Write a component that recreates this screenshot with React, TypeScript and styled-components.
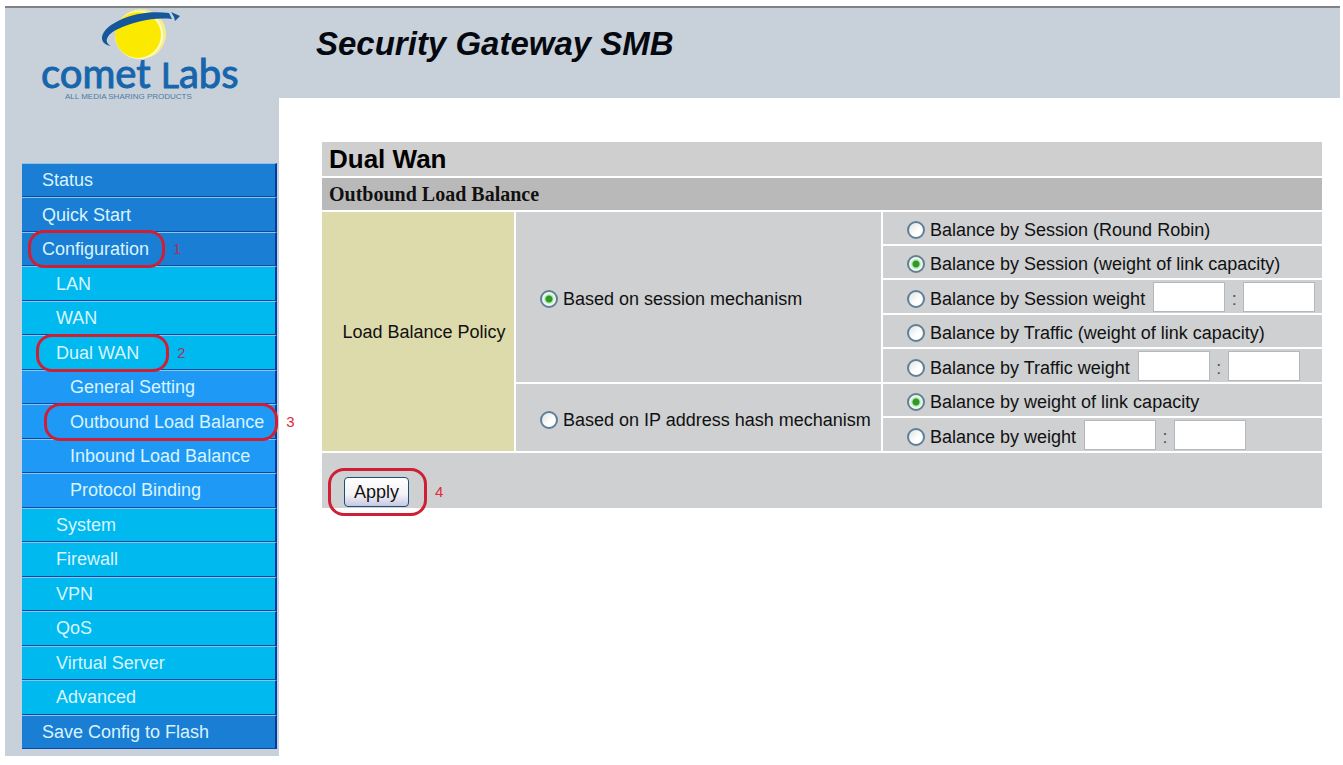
import React, { Fragment } from 'react';
import styled, { createGlobalStyle, css } from 'styled-components';

const Global = createGlobalStyle`
  * { box-sizing: border-box; }
  body {
    margin: 0;
    background: #fff;
    color: #111;
    font: 18px/20px "Liberation Sans", Arial, sans-serif;
  }
`;

const Page = styled.div`
  display: flex;
  align-items: flex-start;
  padding: 6px 3px 8px 5px;
`;

const Sidebar = styled.aside`
  flex: 0 0 274px;
  padding-bottom: 7px;
  border-top: 2px solid #7e8386;
  background: #c8d1d9;
`;

const LogoLink = styled.a`
  display: block;
  height: 155px;
  padding-left: 31px;
`;

const Nav = styled.nav`
  margin: 0 2px 0 17px;
`;

const NavList = styled.ul`
  display: grid;
  grid-auto-rows: 1fr;
  min-height: 586px;
  margin: 0;
  padding: 0;
  list-style: none;
`;

const levels = [
  { background: '#1a7ed4', indent: 20 },
  { background: '#00b9ee', indent: 34 },
  { background: '#1e9af6', indent: 48 },
];

const NavItem = styled.li<{ $level: number }>`
  display: flex;
  align-items: center;
  padding-left: ${(p) => levels[p.$level].indent}px;
  background: ${(p) => levels[p.$level].background};
  border-top: 1px solid #8cc4f0;
  border-right: 2px solid #063a9c;
  border-bottom: 1px solid #0a4ba8;
`;

const NavLink = styled.a`
  color: #d9f4ff;
  text-decoration: none;
  white-space: nowrap;
`;

const Marked = styled.span`
  position: relative;
  display: inline-flex;
  vertical-align: top;
`;

const Ring = styled.span<{ $left: number; $right: number }>`
  position: absolute;
  top: -9px;
  bottom: -9px;
  left: -${(p) => p.$left}px;
  right: -${(p) => p.$right}px;
  border: 3px solid #cf1f35;
  border-radius: 16px;
  pointer-events: none;
`;

const Step = styled.span<{ $muted?: boolean }>`
  position: absolute;
  left: 100%;
  top: 50%;
  margin: -10px 0 0 11px;
  color: ${(p) => (p.$muted ? '#a8305f' : '#e02a38')};
  font-size: 15px;
`;

const Main = styled.main`
  flex: 1;
  min-width: 0;
`;

const Header = styled.header`
  height: 92px;
  padding: 18px 37px;
  border-top: 2px solid #7e8386;
  background: #c8d1d9;
`;

const ProductName = styled.h1`
  margin: 0;
  color: #05080f;
  font-size: 33px;
  font-style: italic;
  line-height: 36px;
`;

const Content = styled.form`
  padding: 42px 16px 0 41px;
`;

const Settings = styled.table`
  width: 100%;
  border-collapse: separate;
  border-spacing: 2px;
  table-layout: fixed;
`;

const PolicyColumn = styled.col`
  width: 192px;
`;

const MechanismColumn = styled.col`
  width: 365px;
`;

const cell = css`
  padding: 0;
  background: #ced0d2;
  text-align: left;
  font-weight: normal;
`;

const TitleCell = styled.th`
  ${cell}
  height: 34px;
  padding-left: 7px;
  background: #cfcfcf;
  color: #000;
  font-size: 26px;
  font-weight: bold;
  line-height: 32px;
`;

const SectionCell = styled.th`
  ${cell}
  height: 32px;
  padding-left: 7px;
  background: #b9b9b9;
  font-family: "Liberation Serif", "Times New Roman", serif;
  font-size: 20px;
  font-weight: bold;
`;

const PolicyCell = styled.th`
  ${cell}
  padding-left: 12px;
  background: #dddbab;
  text-align: center;
  white-space: nowrap;
`;

const MechanismCell = styled.td`
  ${cell}
  padding-left: 24px;
`;

const OptionCell = styled.td<{ $inputs?: boolean }>`
  ${cell}
  height: ${(p) => (p.$inputs ? 33 : 32)}px;
  padding-left: 24px;
`;

const ActionCell = styled.td`
  ${cell}
  height: 55px;
  padding: 24px 0 0 22px;
  vertical-align: top;
`;

const Line = styled.div`
  display: flex;
  align-items: center;
`;

const Choice = styled.label`
  display: flex;
  align-items: center;
  gap: 5px;
  padding-top: 4px;
  white-space: nowrap;
`;

const Radio = styled.input`
  appearance: none;
  flex: none;
  width: 18px;
  height: 18px;
  margin: 0;
  border: 2px solid #5f7f96;
  border-radius: 50%;
  background: linear-gradient(135deg, #dfe3e3, #fff 60%);

  &:checked {
    background: radial-gradient(circle, #2f9a2c 0 3px, #b9e8b0 4px, #f4fbf3 6px);
  }
`;

const Weight = styled.input`
  width: 72px;
  height: 30px;
  margin: 0;
  border: 1px solid #b3b8bd;
  background: #fff;
  font: inherit;
`;

const Pair = styled.span`
  display: flex;
  align-items: center;
  margin-left: 8px;
`;

const Colon = styled.span`
  width: 18px;
  padding-top: 4px;
  color: #555;
  text-align: center;
`;

const ApplyButton = styled.button`
  width: 65px;
  height: 30px;
  padding: 0;
  border: 1px solid #1c4f78;
  border-radius: 4px;
  background: linear-gradient(#fff, #f2f2f8 60%, #c6c8e2);
  color: #111;
  font: inherit;
`;

const Wordmark = styled.text`
  fill: #1766ad;
  stroke: #1766ad;
  stroke-width: 1px;
  font: 40px Lato, "Liberation Sans", sans-serif;
`;

const WordmarkInitial = styled.tspan`
  font-size: 35px;
`;

const Tagline = styled.text`
  fill: #4b7ba8;
  font: 8px "Liberation Sans", Arial, sans-serif;
`;

type Item = { label: string; level: number; step?: number; ring?: [number, number] };

const items: Item[] = [
  { label: 'Status', level: 0 },
  { label: 'Quick Start', level: 0 },
  { label: 'Configuration', level: 0, step: 1, ring: [14, 16] },
  { label: 'LAN', level: 1 },
  { label: 'WAN', level: 1 },
  { label: 'Dual WAN', level: 1, step: 2, ring: [20, 30] },
  { label: 'General Setting', level: 2 },
  { label: 'Outbound Load Balance', level: 2, step: 3, ring: [26, 14] },
  { label: 'Inbound Load Balance', level: 2 },
  { label: 'Protocol Binding', level: 2 },
  { label: 'System', level: 1 },
  { label: 'Firewall', level: 1 },
  { label: 'VPN', level: 1 },
  { label: 'QoS', level: 1 },
  { label: 'Virtual Server', level: 1 },
  { label: 'Advanced', level: 1 },
  { label: 'Save Config to Flash', level: 0 },
];

type Option = { label: string; weights?: boolean; checked?: boolean };

const mechanisms: { label: string; checked?: boolean; options: Option[] }[] = [
  {
    label: 'Based on session mechanism',
    checked: true,
    options: [
      { label: 'Balance by Session (Round Robin)' },
      { label: 'Balance by Session (weight of link capacity)', checked: true },
      { label: 'Balance by Session weight', weights: true },
      { label: 'Balance by Traffic (weight of link capacity)' },
      { label: 'Balance by Traffic weight', weights: true },
    ],
  },
  {
    label: 'Based on IP address hash mechanism',
    options: [
      { label: 'Balance by weight of link capacity', checked: true },
      { label: 'Balance by weight', weights: true },
    ],
  },
];

function Logo() {
  return (
    <svg width="210" height="96" viewBox="36 8 210 96" role="img" aria-label="comet labs">
      <circle cx="141" cy="34" r="25" fill="#f6ee86" />
      <circle cx="139" cy="35" r="24" fill="#fffbd0" />
      <circle cx="138" cy="35" r="23" fill="#fbea00" />
      <path d="M111 46C98 44 98 31 118 21C134 13 152 11 169 13L172 19C152 17 134 22 118 29C107 34 103 42 111 46Z" fill="#14579a" />
      <path d="M171 12L180 16L175 21L174 17Z" fill="#14579a" />
      <Wordmark x="41" y="88">comet <WordmarkInitial>L</WordmarkInitial>abs</Wordmark>
      <Tagline x="65" y="99">ALL MEDIA SHARING PRODUCTS</Tagline>
    </svg>
  );
}

export default function App() {
  return (
    <>
      <Global />
      <Page>
        <Sidebar>
          <LogoLink href="#"><Logo /></LogoLink>
          <Nav>
            <NavList>
              {items.map((item) => (
                <NavItem key={item.label} $level={item.level}>
                  <Marked>
                    <NavLink href="#">{item.label}</NavLink>
                    {item.ring && (
                      <Ring $left={item.ring[0]} $right={item.ring[1]}>
                        <Step $muted={item.step !== 3}>{item.step}</Step>
                      </Ring>
                    )}
                  </Marked>
                </NavItem>
              ))}
            </NavList>
          </Nav>
        </Sidebar>
        <Main>
          <Header><ProductName>Security Gateway SMB</ProductName></Header>
          <Content onSubmit={(e) => e.preventDefault()}>
            <Settings>
              <colgroup>
                <PolicyColumn />
                <MechanismColumn />
                <col />
              </colgroup>
              <thead>
                <tr><TitleCell colSpan={3}>Dual Wan</TitleCell></tr>
                <tr><SectionCell colSpan={3}>Outbound Load Balance</SectionCell></tr>
              </thead>
              <tbody>
                {mechanisms.map((m, mi) => (
                  <Fragment key={m.label}>
                    {m.options.map((o, oi) => (
                      <tr key={o.label}>
                        {mi === 0 && oi === 0 && <PolicyCell rowSpan={7} scope="rowgroup">Load Balance Policy</PolicyCell>}
                        {oi === 0 && (
                          <MechanismCell rowSpan={m.options.length}>
                            <Choice><Radio type="radio" name="mechanism" defaultChecked={m.checked} />{m.label}</Choice>
                          </MechanismCell>
                        )}
                        <OptionCell $inputs={o.weights}>
                          <Line>
                            <Choice><Radio type="radio" name={`policy-${mi}`} defaultChecked={o.checked} />{o.label}</Choice>
                            {o.weights && (
                              <Pair>
                                <Weight aria-label={`${o.label}, first link`} />
                                <Colon>:</Colon>
                                <Weight aria-label={`${o.label}, second link`} />
                              </Pair>
                            )}
                          </Line>
                        </OptionCell>
                      </tr>
                    ))}
                  </Fragment>
                ))}
                <tr>
                  <ActionCell colSpan={3}>
                    <Marked>
                      <ApplyButton type="submit">Apply</ApplyButton>
                      <Ring $left={16} $right={18}>
                        <Step>4</Step>
                      </Ring>
                    </Marked>
                  </ActionCell>
                </tr>
              </tbody>
            </Settings>
          </Content>
        </Main>
      </Page>
    </>
  );
}
